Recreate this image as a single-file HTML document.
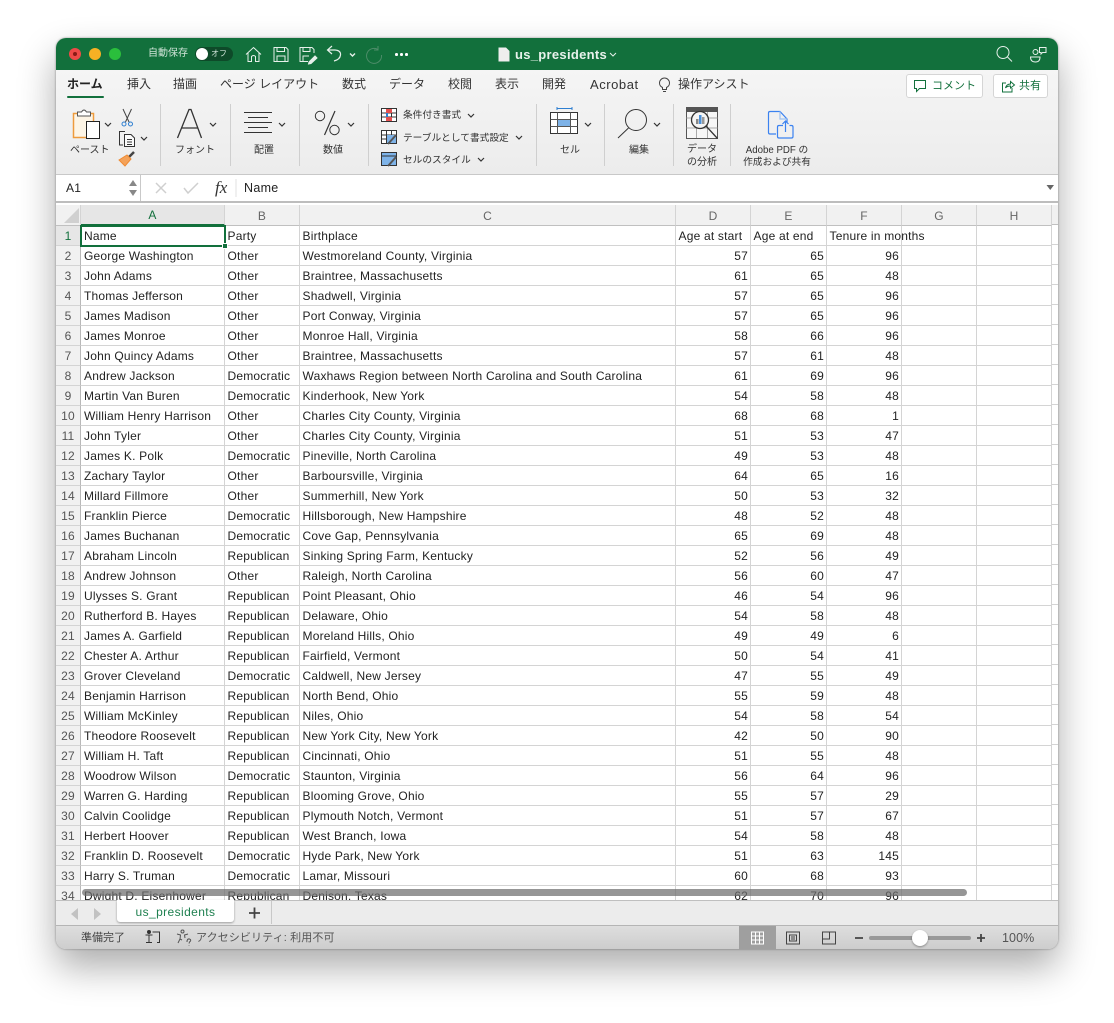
<!DOCTYPE html>
<html lang="ja"><head><meta charset="utf-8"><title>us_presidents</title>
<style>
html,body{margin:0;padding:0;background:#fff;width:1114px;height:1023px;overflow:hidden}
*{box-sizing:border-box}
body{font-family:"Liberation Sans","Noto Sans CJK JP",sans-serif;color:#222}
#win{position:absolute;left:56px;top:38px;width:1002px;height:911px;border-radius:10px;background:#f1f1f1;box-shadow:0 18px 38px rgba(0,0,0,.33),0 0 2px rgba(0,0,0,.4)}
#clip{position:absolute;inset:0;border-radius:10px;overflow:hidden}
.a{position:absolute;white-space:nowrap}
svg{position:absolute;overflow:visible}
#bar{left:0;top:0;width:1002px;height:32px;background:#12703c}
#rib{left:0;top:32px;width:1002px;height:105px;background:linear-gradient(#f5f5f5,#ececec);border-bottom:1px solid #c8c8c8}
.tab{position:absolute;top:38px;font-size:12px;color:#333;white-space:nowrap;line-height:17px}
.lb{position:absolute;font-size:10px;color:#333;white-space:nowrap;text-align:center;line-height:12.500px}
.sep{position:absolute;top:66px;width:1px;height:62px;background:#cfcfcf}
#fb{left:0;top:137px;width:1002px;height:28px;background:#fff;border-bottom:2px solid #bdbdbd}
table{position:absolute;left:0;top:167px;border-collapse:separate;border-spacing:0;table-layout:fixed;width:996px;font-size:12px;letter-spacing:.2px;color:#222}
td,th{height:20px;padding:2px 2px 0 2.500px;border-right:1px solid #d4d4d4;border-bottom:1px solid #d4d4d4;font-weight:normal;overflow:visible;white-space:nowrap;line-height:17px;text-align:left}
td:nth-child(2){padding-left:3px}
td.n{text-align:center;color:#555;background:#f1f1f1;padding:2px 0 0;border-right:1px solid #b8b8b8}
th{text-align:center;color:#666;background:#f1f1f1;padding:2px 0 0;border-bottom:1px solid #c0c0c0}
td.r{text-align:right;padding-right:2px}
#sheet{left:0;top:165px;width:1002px;height:697px;overflow:hidden;background:#fff}
#sheet table{top:2px}
#tabs{left:0;top:862px;width:1002px;height:26px;background:#ececec;border-top:1px solid #bfbfbf;border-bottom:1px solid #b5b5b5}
#st{left:0;top:888px;width:1002px;height:23px;background:linear-gradient(#dedede,#cdcdcd)}
.sm{position:absolute;font-size:11px;color:#444;white-space:nowrap;line-height:16px}
</style></head><body>
<div id="win"><div id="clip">

<div class="a" id="bar">
<div class="a" style="left:13px;top:10px;width:12px;height:12px;border-radius:50%;background:#ee4a47"></div>
<div class="a" style="left:17px;top:14px;width:4px;height:4px;border-radius:50%;background:#8a1a16"></div>
<div class="a" style="left:33px;top:10px;width:12px;height:12px;border-radius:50%;background:#f6b024"></div>
<div class="a" style="left:53px;top:10px;width:12px;height:12px;border-radius:50%;background:#2abf3c"></div>
<div class="a" style="left:92px;top:9px;font-size:10px;line-height:14px;color:#cfe3d7">自動保存</div>
<div class="a" style="left:139px;top:9px;width:38px;height:14px;border-radius:7px;background:#0e4a29"></div>
<div class="a" style="left:140px;top:10px;width:12px;height:12px;border-radius:50%;background:#fff"></div>
<div class="a" style="left:155px;top:10px;font-size:8px;line-height:12px;color:#cfe3d7">オフ</div>
<svg style="left:0;top:0" width="400" height="32" fill="none" stroke="#e6f0ea" stroke-width="1">
<path d="M190 16.500 197.500 9.500 205 16.500M192 15V23.500H195.500V18.500Q197.500 16.500 199.500 18.500V23.500H203V15"/>
<path d="M218 9.500H230L232 11.500V23.500H218ZM221 9.500V13.500H228.500V9.500M221 23.500V18H229V23.500"/>
<path d="M252 23.500H244V9.500H256L258 11.500V15M247 9.500V13.500H254V9.500M247 23.500V18H253"/><path d="M253 24 259 18 261 20 255 25.500 252.500 26Z" fill="#e6f0ea"/>
<path d="M276 8 271.500 12 276 16M272 12H279Q285 12.500 284.500 17 284 21.500 278 23" stroke-width="1.200"/>
<path d="M294 15.500 296.500 18 299 15.500" stroke-width="1.400"/>
<path d="M322 11.500A7.500 7.500 0 1 0 325.500 17M322 8V12H318" stroke="#4d8c69"/>
</svg>
<div class="a" style="left:339px;top:15px;width:2.500px;height:2.500px;border-radius:50%;background:#fff;box-shadow:5px 0 #fff,10px 0 #fff"></div>
<svg style="left:442px;top:9px" width="12" height="15"><path d="M0.500 0.500H8L11.500 4V14.500H0.500Z" fill="#eee"/></svg>
<div class="a" style="left:459px;top:8px;font-size:13px;font-weight:bold;line-height:17px;color:#e8f2ec;letter-spacing:.3px">us_presidents</div>
<svg style="left:0;top:0" width="1002" height="32" fill="none" stroke="#e6f0ea" stroke-width="1">
<path d="M554 15 557 18 560 15"/>
<circle cx="947" cy="14.500" r="6"/><path d="M951.500 19 956 23.500"/>
<path d="M974.500 19H984Q984 24 979.500 24 974.500 24 974.500 19ZM977 14a2.500 2.500 0 1 0 5 0a2.500 2.500 0 1 0-5 0M983.500 9.500H990V14.500H986.500L985 16V14.500H983.500Z"/>
</svg>
</div>

<div class="a" id="rib"></div>
<div class="tab" style="left:11px;font-weight:bold;color:#222">ホーム</div>
<div class="a" style="left:11px;top:58px;width:37px;height:2px;background:#12703c;border-radius:1px"></div>
<div class="tab" style="left:71px">挿入</div>
<div class="tab" style="left:117px">描画</div>
<div class="tab" style="left:164px">ページ レイアウト</div>
<div class="tab" style="left:286px">数式</div>
<div class="tab" style="left:333px">データ</div>
<div class="tab" style="left:392px">校閲</div>
<div class="tab" style="left:439px">表示</div>
<div class="tab" style="left:486px">開発</div>
<div class="tab" style="left:534px;font-size:13px;letter-spacing:.55px">Acrobat</div>
<div class="tab" style="left:622px">操作アシスト</div>
<svg style="left:603px;top:40px" width="11" height="15" fill="none" stroke="#444"><path d="M3.500 9.500Q.5 8 .5 5A5 5 0 0 1 10.500 5Q10.500 8 7.500 9.500V11.500H3.500ZM4 13.500H7"/></svg>

<div class="a" style="left:850px;top:36px;width:77px;height:24px;background:#fff;border:1px solid #d5d5d5;border-radius:3px"></div>
<svg style="left:858px;top:42px" width="13" height="13" fill="none" stroke="#12703c"><path d="M.5 .5H11.500V8.500H5.500L2.500 11.500V8.500H.5Z"/></svg>
<div class="a" style="left:876px;top:41px;font-size:11px;line-height:15px;color:#12703c">コメント</div>
<div class="a" style="left:937px;top:36px;width:55px;height:24px;background:#fff;border:1px solid #d5d5d5;border-radius:3px"></div>
<svg style="left:946px;top:42px" width="13" height="13" fill="none" stroke="#12703c"><path d="M4 3H.5V12H10V8M3.500 8Q4.500 4 8.500 4V1.500L12.500 5 8.500 8V6Q5 6 3.500 8Z"/></svg>
<div class="a" style="left:963px;top:41px;font-size:11px;line-height:15px;color:#12703c">共有</div>

<svg style="left:0;top:0" width="800" height="137" fill="none" stroke="#333">
<!-- paste -->
<path d="M17.500 75.500H37.500V99.500H17.500Z" fill="#fdf5e6" stroke="#ee9b3c" stroke-width="1.500"/>
<path d="M21.500 78V74H25.500Q28 70 30.500 74H34.500V78Z" fill="#fff" stroke="#555"/>
<rect x="30.500" y="83.500" width="13" height="17" fill="#fff" stroke="#222"/>
<path d="M49 85 52 88 55 85" stroke-width="1.200"/>
<!-- scissors -->
<path d="M67 71 73 84M75.500 71 69.500 84" stroke="#444"/><circle cx="68" cy="86" r="2" stroke="#2e7fd1"/><circle cx="74.500" cy="86" r="2" stroke="#2e7fd1"/>
<!-- copy -->
<path d="M69 93.500H63.500V107H67"/><path d="M68.500 96.500H75L78.500 100V108.500H68.500ZM71 101.500H76M71 104H76M71 106.500H76" fill="#fafafa"/>
<path d="M85 99 88 102 91 99" stroke-width="1.200"/>
<!-- brush -->
<path d="M78 114 72 120" stroke="#444" stroke-width="2.500"/>
<path d="M63 122 71 117 75 121 69 128Q66 125 63 122Z" fill="#f4a259" stroke="#ee8a32"/>
<!-- font A -->
<path d="M121.500 100 133 71.500H135L145.500 100M125 90H141.500" stroke="#333" stroke-width="1.300"/>
<path d="M154 85 157 88 160 85" stroke-width="1.200"/>
<!-- align -->
<path d="M188 74.500H216M192 79.500H212M188 84.500H216M192 89.500H212M188 94.500H216" stroke="#333"/>
<path d="M223 85 226 88 229 85" stroke-width="1.200"/>
<!-- percent -->
<path d="M268.500 97 279 73" stroke="#333" stroke-width="1.200"/><circle cx="264" cy="78" r="4.700"/><circle cx="278.500" cy="92" r="4.700"/>
<path d="M292 85 295 88 298 85" stroke-width="1.200"/>
<!-- cond -->
<g stroke="#333"><rect x="325.500" y="70.500" width="15" height="13" fill="#fff"/><path d="M330.500 70.500V83.500M335.500 70.500V83.500M325.500 75H340.500M325.500 79H340.500"/></g>
<rect x="330" y="71" width="6" height="4" fill="#e2504f" stroke="none"/><rect x="330" y="79" width="6" height="4" fill="#e2504f" stroke="none"/><rect x="330" y="75" width="2" height="4" fill="#2e7fd1" stroke="none"/>
<g stroke="#333"><rect x="325.500" y="92.500" width="15" height="13" fill="#fff"/><path d="M330.500 92.500V105.500M335.500 92.500V105.500M325.500 97H340.500M325.500 101H340.500"/></g>
<rect x="331" y="97" width="9" height="8" fill="#7eb3e8" stroke="none"/><path d="M332 106 340 97" stroke="#555" stroke-width="2"/>
<g stroke="#333"><rect x="325.500" y="114.500" width="15" height="13" fill="#7eb3e8"/><path d="M325.500 118H340.500"/></g><path d="M332 128 340 119" stroke="#555" stroke-width="2"/>
<!-- cell -->
<path d="M501 70.500H516M501 69V72M516 69V72" stroke="#2e7fd1"/>
<rect x="494.500" y="74.500" width="27" height="21" fill="#fff" stroke="#333"/><rect x="501" y="81" width="14" height="7.500" fill="#7eb3e8" stroke="none"/>
<path d="M494.500 81.500H521.500M494.500 88.500H521.500M501.500 74.500V95.500M514.500 74.500V95.500" stroke="#555"/>
<path d="M529 85 532 88 535 85" stroke-width="1.200"/>
<!-- find -->
<circle cx="580" cy="82" r="10.500" stroke="#333"/><path d="M572.500 90 562 100" stroke="#333"/>
<path d="M598 85 601 88 604 85" stroke-width="1.200"/>
<!-- data analysis -->
<rect x="630.500" y="69.500" width="31" height="31" fill="#f7f7f7" stroke="#555"/><rect x="630" y="69" width="32" height="5" fill="#555" stroke="none"/>
<path d="M630.500 80H661.500M630.500 90H661.500M640.500 74V100M651.500 74V100" stroke="#aaa"/>
<circle cx="644" cy="82" r="8.500" fill="#f5f5f5" stroke="#333" stroke-width="1.300"/><path d="M650 88 661.500 100.500" stroke="#333" stroke-width="1.300"/>
<rect x="640" y="81" width="2.500" height="5" fill="#888" stroke="none"/><rect x="643" y="77" width="2.500" height="9" fill="#4a90d9" stroke="none"/><rect x="646" y="79" width="2.500" height="7" fill="#999" stroke="none"/>
<!-- pdf -->
<g stroke="#3b82f0" stroke-width="1.200">
<path d="M720 96H714Q712.500 96 712.500 94.500V75Q712.500 73.500 714 73.500H724L731 81V84"/>
<path d="M724 73.500V81H731" stroke="#9dc2f2"/>
<path d="M727 87.500H723Q721.500 87.500 721.500 89V98.500Q721.500 100 723 100H735.500Q737 100 737 98.500V89Q737 87.500 735.500 87.500H733.500"/>
<path d="M729.500 94V83M726.500 86 729.500 83 732.500 86"/>
</g>
</svg>
<div class="sep" style="left:104px"></div><div class="sep" style="left:174px"></div><div class="sep" style="left:243px"></div><div class="sep" style="left:312px"></div><div class="sep" style="left:480px"></div><div class="sep" style="left:548px"></div><div class="sep" style="left:617px"></div><div class="sep" style="left:674px"></div>
<div class="lb" style="left:14px;top:107px">ペースト</div>
<div class="lb" style="left:119px;top:107px">フォント</div>
<div class="lb" style="left:198px;top:107px">配置</div>
<div class="lb" style="left:267px;top:107px">数値</div>
<div class="lb" style="left:504px;top:107px">セル</div>
<div class="lb" style="left:573px;top:107px">編集</div>
<div class="lb" style="left:631px;top:106px;width:30px">データ<br>の分析</div>
<div class="lb" style="left:687px;top:106.500px;width:68px;font-size:9.700px">Adobe PDF の<br>作成および共有</div>
<div class="lb" style="left:347px;top:72px;font-size:9.700px">条件付き書式</div>
<div class="lb" style="left:347px;top:95px;font-size:9.700px">テーブルとして書式設定</div>
<div class="lb" style="left:347px;top:117px;font-size:9.700px">セルのスタイル</div>
<svg style="left:0;top:0" width="500" height="137" fill="none" stroke="#333" stroke-width="1.200"><path d="M412 76 415 79 418 76M460 98 463 101 466 98M422 120 425 123 428 120"/></svg>

<div class="a" id="fb">
<div class="a" style="left:0;top:0;width:85px;height:26px;border-right:1px solid #c9c9c9;border-bottom:0;font-size:12px;line-height:26px;padding-left:10px;letter-spacing:.3px">A1</div>
<svg style="left:72px;top:4px" width="10" height="18"><path d="M5 1 9 7H1ZM5 17 1 11H9Z" fill="#888"/></svg>
<svg style="left:90px;top:0" width="200" height="26" fill="none"><path d="M10 8 20 18M20 8 10 18M38 13 42 18 52 8" stroke="#cfcfcf" stroke-width="1.500"/><path d="M90 4V22" stroke="#e2e2e2"/></svg>
<div class="a" style="left:159px;top:3px;font:italic 17px/20px 'Liberation Serif',serif;color:#333">fx</div>
<div class="a" style="left:188px;top:0;font-size:12.500px;line-height:26px;letter-spacing:.3px">Name</div>
<svg style="left:990px;top:9px" width="9" height="8"><path d="M.5 1H8L4.250 6Z" fill="#666"/></svg>
</div>

<div class="a" id="sheet">
<div class="a" style="left:996px;top:2px;width:6px;height:695px;background:repeating-linear-gradient(#fff 0 19px,#d4d4d4 19px 20px)"></div>
<div class="a" style="left:996px;top:2px;width:6px;height:20px;background:#f1f1f1;border-bottom:1px solid #c0c0c0"></div>
<table>
<colgroup><col style="width:25px"><col style="width:144px"><col style="width:75px"><col style="width:376px"><col style="width:75px"><col style="width:76px"><col style="width:75px"><col style="width:75px"><col style="width:75px"></colgroup>
<tr><th style="background:#f1f1f1"></th><th style="background:#e6e6e6;color:#12703c;border-bottom:2px solid #12703c">A</th><th>B</th><th>C</th><th>D</th><th>E</th><th>F</th><th>G</th><th>H</th></tr>
<tr><td class="n" style="color:#12703c;background:#e6e6e6">1</td><td>Name</td><td>Party</td><td>Birthplace</td><td>Age at start</td><td>Age at end</td><td>Tenure in months</td><td></td><td></td></tr>
<tr><td class="n">2</td><td>George Washington</td><td>Other</td><td>Westmoreland County, Virginia</td><td class="r">57</td><td class="r">65</td><td class="r">96</td><td></td><td></td></tr>
<tr><td class="n">3</td><td>John Adams</td><td>Other</td><td>Braintree, Massachusetts</td><td class="r">61</td><td class="r">65</td><td class="r">48</td><td></td><td></td></tr>
<tr><td class="n">4</td><td>Thomas Jefferson</td><td>Other</td><td>Shadwell, Virginia</td><td class="r">57</td><td class="r">65</td><td class="r">96</td><td></td><td></td></tr>
<tr><td class="n">5</td><td>James Madison</td><td>Other</td><td>Port Conway, Virginia</td><td class="r">57</td><td class="r">65</td><td class="r">96</td><td></td><td></td></tr>
<tr><td class="n">6</td><td>James Monroe</td><td>Other</td><td>Monroe Hall, Virginia</td><td class="r">58</td><td class="r">66</td><td class="r">96</td><td></td><td></td></tr>
<tr><td class="n">7</td><td>John Quincy Adams</td><td>Other</td><td>Braintree, Massachusetts</td><td class="r">57</td><td class="r">61</td><td class="r">48</td><td></td><td></td></tr>
<tr><td class="n">8</td><td>Andrew Jackson</td><td>Democratic</td><td>Waxhaws Region between North Carolina and South Carolina</td><td class="r">61</td><td class="r">69</td><td class="r">96</td><td></td><td></td></tr>
<tr><td class="n">9</td><td>Martin Van Buren</td><td>Democratic</td><td>Kinderhook, New York</td><td class="r">54</td><td class="r">58</td><td class="r">48</td><td></td><td></td></tr>
<tr><td class="n">10</td><td>William Henry Harrison</td><td>Other</td><td>Charles City County, Virginia</td><td class="r">68</td><td class="r">68</td><td class="r">1</td><td></td><td></td></tr>
<tr><td class="n">11</td><td>John Tyler</td><td>Other</td><td>Charles City County, Virginia</td><td class="r">51</td><td class="r">53</td><td class="r">47</td><td></td><td></td></tr>
<tr><td class="n">12</td><td>James K. Polk</td><td>Democratic</td><td>Pineville, North Carolina</td><td class="r">49</td><td class="r">53</td><td class="r">48</td><td></td><td></td></tr>
<tr><td class="n">13</td><td>Zachary Taylor</td><td>Other</td><td>Barboursville, Virginia</td><td class="r">64</td><td class="r">65</td><td class="r">16</td><td></td><td></td></tr>
<tr><td class="n">14</td><td>Millard Fillmore</td><td>Other</td><td>Summerhill, New York</td><td class="r">50</td><td class="r">53</td><td class="r">32</td><td></td><td></td></tr>
<tr><td class="n">15</td><td>Franklin Pierce</td><td>Democratic</td><td>Hillsborough, New Hampshire</td><td class="r">48</td><td class="r">52</td><td class="r">48</td><td></td><td></td></tr>
<tr><td class="n">16</td><td>James Buchanan</td><td>Democratic</td><td>Cove Gap, Pennsylvania</td><td class="r">65</td><td class="r">69</td><td class="r">48</td><td></td><td></td></tr>
<tr><td class="n">17</td><td>Abraham Lincoln</td><td>Republican</td><td>Sinking Spring Farm, Kentucky</td><td class="r">52</td><td class="r">56</td><td class="r">49</td><td></td><td></td></tr>
<tr><td class="n">18</td><td>Andrew Johnson</td><td>Other</td><td>Raleigh, North Carolina</td><td class="r">56</td><td class="r">60</td><td class="r">47</td><td></td><td></td></tr>
<tr><td class="n">19</td><td>Ulysses S. Grant</td><td>Republican</td><td>Point Pleasant, Ohio</td><td class="r">46</td><td class="r">54</td><td class="r">96</td><td></td><td></td></tr>
<tr><td class="n">20</td><td>Rutherford B. Hayes</td><td>Republican</td><td>Delaware, Ohio</td><td class="r">54</td><td class="r">58</td><td class="r">48</td><td></td><td></td></tr>
<tr><td class="n">21</td><td>James A. Garfield</td><td>Republican</td><td>Moreland Hills, Ohio</td><td class="r">49</td><td class="r">49</td><td class="r">6</td><td></td><td></td></tr>
<tr><td class="n">22</td><td>Chester A. Arthur</td><td>Republican</td><td>Fairfield, Vermont</td><td class="r">50</td><td class="r">54</td><td class="r">41</td><td></td><td></td></tr>
<tr><td class="n">23</td><td>Grover Cleveland</td><td>Democratic</td><td>Caldwell, New Jersey</td><td class="r">47</td><td class="r">55</td><td class="r">49</td><td></td><td></td></tr>
<tr><td class="n">24</td><td>Benjamin Harrison</td><td>Republican</td><td>North Bend, Ohio</td><td class="r">55</td><td class="r">59</td><td class="r">48</td><td></td><td></td></tr>
<tr><td class="n">25</td><td>William McKinley</td><td>Republican</td><td>Niles, Ohio</td><td class="r">54</td><td class="r">58</td><td class="r">54</td><td></td><td></td></tr>
<tr><td class="n">26</td><td>Theodore Roosevelt</td><td>Republican</td><td>New York City, New York</td><td class="r">42</td><td class="r">50</td><td class="r">90</td><td></td><td></td></tr>
<tr><td class="n">27</td><td>William H. Taft</td><td>Republican</td><td>Cincinnati, Ohio</td><td class="r">51</td><td class="r">55</td><td class="r">48</td><td></td><td></td></tr>
<tr><td class="n">28</td><td>Woodrow Wilson</td><td>Democratic</td><td>Staunton, Virginia</td><td class="r">56</td><td class="r">64</td><td class="r">96</td><td></td><td></td></tr>
<tr><td class="n">29</td><td>Warren G. Harding</td><td>Republican</td><td>Blooming Grove, Ohio</td><td class="r">55</td><td class="r">57</td><td class="r">29</td><td></td><td></td></tr>
<tr><td class="n">30</td><td>Calvin Coolidge</td><td>Republican</td><td>Plymouth Notch, Vermont</td><td class="r">51</td><td class="r">57</td><td class="r">67</td><td></td><td></td></tr>
<tr><td class="n">31</td><td>Herbert Hoover</td><td>Republican</td><td>West Branch, Iowa</td><td class="r">54</td><td class="r">58</td><td class="r">48</td><td></td><td></td></tr>
<tr><td class="n">32</td><td>Franklin D. Roosevelt</td><td>Democratic</td><td>Hyde Park, New York</td><td class="r">51</td><td class="r">63</td><td class="r">145</td><td></td><td></td></tr>
<tr><td class="n">33</td><td>Harry S. Truman</td><td>Democratic</td><td>Lamar, Missouri</td><td class="r">60</td><td class="r">68</td><td class="r">93</td><td></td><td></td></tr>
<tr><td class="n">34</td><td>Dwight D. Eisenhower</td><td>Republican</td><td>Denison, Texas</td><td class="r">62</td><td class="r">70</td><td class="r">96</td><td></td><td></td></tr>
</table>
<div class="a" style="left:24px;top:22px;width:146px;height:22px;border:2px solid #12703c"></div>
<div class="a" style="left:166px;top:40px;width:6px;height:6px;background:#12703c;border:1px solid #fff"></div>
<svg style="left:8px;top:5px" width="16" height="15"><path d="M15 0V15H0Z" fill="#d0d0d0"/></svg>
<div class="a" style="left:26px;top:686px;width:885px;height:7px;border-radius:4px;background:rgba(110,110,110,.72)"></div>
</div>

<div class="a" id="tabs">
<svg style="left:15px;top:7px" width="40" height="12"><path d="M0 6 7 0V12ZM23 0 30 6 23 12Z" fill="#c2c2c2"/></svg>
<div class="a" style="left:61px;top:-1px;width:117px;height:22px;background:#fff;border-radius:0 0 3px 3px;box-shadow:0 1px 2px rgba(0,0,0,.35);color:#1f8050;font-size:12px;line-height:24px;text-align:center;letter-spacing:.4px">us_presidents</div>
<svg style="left:192px;top:5px" width="24" height="20"><path d="M1 7H12M6.500 1.500V12.500" stroke="#444" stroke-width="1.800"/><path d="M23.500 -5V18" stroke="#c8c8c8"/></svg>
</div>

<div class="a" id="st">
<div class="sm" style="left:25px;top:4px">準備完了</div>
<svg style="left:88px;top:3px" width="20" height="16" fill="none" stroke="#333"><circle cx="5" cy="3" r="1.500" fill="#333"/><path d="M1.500 6H8.500M5 6V13M2 13.500H8M8.500 3H15.500V13.500H13"/></svg>
<svg style="left:120px;top:3px" width="18" height="17" fill="none" stroke="#555"><circle cx="6.500" cy="2.500" r="1.500"/><path d="M1 5 4.500 6 4 10 2 14M12 5 8.500 6 9 9M4 10 6 11M11 13Q11 9.500 13.500 10 16 11 13.500 13L13 14.500M13 16V16.500"/></svg>
<div class="sm" style="left:140px;top:4px;color:#555;letter-spacing:.12px">アクセシビリティ: 利用不可</div>
<div class="a" style="left:683px;top:0;width:37px;height:23px;background:#9f9f9f"></div>
<svg style="left:0;top:0" width="1002" height="23" fill="none">
<path d="M695.500 6H707.500V18H695.500ZM699.500 6V18M703.500 6V18M695.500 10H707.500M695.500 14H707.500" stroke="#fff"/>
<path d="M730.500 6H743.500V18H730.500ZM733.500 9H740.500V15H733.500ZM735 11H739M735 13H739" stroke="#444"/>
<path d="M766.500 6H779.500V18H766.500ZM766.500 13H773.500V6" stroke="#444"/>
<path d="M799 12H807M921 12H929M925 8V16" stroke="#444" stroke-width="1.800"/>
<path d="M815 12H913" stroke="#999" stroke-width="4" stroke-linecap="round"/>
</svg>
<div class="a" style="left:856px;top:4px;width:16px;height:16px;border-radius:50%;background:#fff;box-shadow:0 1px 2px rgba(0,0,0,.35)"></div>
<div class="a" style="left:946px;top:4px;font-size:12.500px;line-height:16px;color:#555;letter-spacing:.1px">100%</div>
</div>

</div></div>
</body></html>
